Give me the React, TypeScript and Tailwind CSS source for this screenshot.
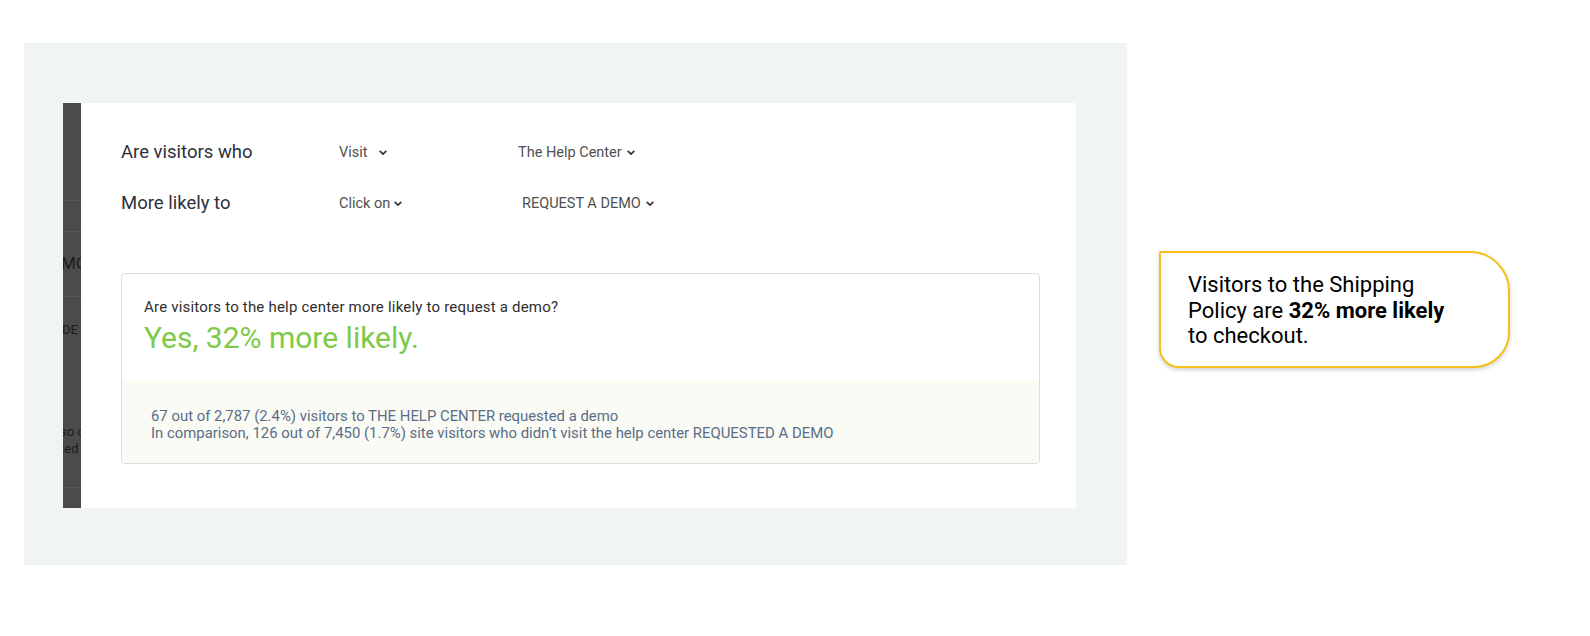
import React from 'react';

const Chevron: React.FC<{ className?: string }> = ({ className }) => (
  <svg width="8" height="6" viewBox="0 0 8 6" className={className} fill="none">
    <path d="M1.2 1.4 L4 4.2 L6.8 1.4" stroke="#3a3a3a" strokeWidth="1.8" strokeLinecap="round" strokeLinejoin="round" />
  </svg>
);

const Picker: React.FC<{ label: string; gap?: string; className?: string }> = ({ label, gap = 'ml-[5px]', className = '' }) => (
  <div className={`flex items-center h-[24px] pt-[1px] text-[14.5px] leading-[22px] text-[#4f4f4f] ${className}`}>
    <span>{label}</span>
    <Chevron className={`${gap} mt-[1px]`} />
  </div>
);

const Strip: React.FC = () => (
  <div className="w-[18px] h-[405px] bg-[#4b4b4b] overflow-hidden flex flex-col text-[#1c1c1c] whitespace-nowrap">
    <div className="h-[98px] border-b border-[#565656]" />
    <div className="h-[31px] border-b border-[#565656]" />
    <div className="h-[65px] border-b border-[#565656] flex items-center -ml-[2px] text-[17px]">MO</div>
    <div className="h-[106px] flex items-start pt-[23px] text-[13px] -ml-[1px]">DE</div>
    <div className="h-[85px] border-b border-[#565656] flex flex-col pt-[20px] text-[13px] leading-[17px] -ml-[3px]">
      <span>so c</span>
      <span>ted</span>
    </div>
  </div>
);

const Callout: React.FC = () => (
  <div className="w-[351px] h-[117px] border-2 border-[#f5bf1e] rounded-tl-[2px] rounded-tr-[40px] rounded-br-[36px] rounded-bl-[20px] bg-white shadow-[0_2px_4px_rgba(0,0,0,0.18)] pl-[27px] pt-[19px] text-[22px] leading-[25.5px] text-black">
    Visitors to the Shipping
    <br />
    Policy are <span className="font-bold">32% more likely</span>
    <br />
    to checkout.
  </div>
);

export default function App() {
  return (
    <div
      className="w-[1590px] h-[636px] bg-white flex items-start pl-[24px] pt-[43px]"
      style={{ fontFamily: 'Roboto, "Liberation Sans", sans-serif' }}
    >
      <div className="w-[1103px] h-[522px] bg-[#f0f4f4] pl-[39px] pt-[60px] flex items-start">
        <Strip />
        <div className="w-[995px] h-[405px] bg-white pl-[40px] pr-[36px] pt-[37px]">
          <div className="grid grid-cols-[218px_179px_1fr] gap-y-[27px] items-center">
            <div className="h-[24px] text-[18.5px] leading-[24px] text-[#2b313b]">Are visitors who</div>
            <Picker label="Visit" gap="ml-[11px]" />
            <Picker label="The Help Center" />
            <div className="h-[24px] text-[18.5px] leading-[24px] text-[#2b313b]">More likely to</div>
            <Picker label="Click on" gap="ml-[4px]" />
            <Picker label="REQUEST A DEMO" className="ml-[4px]" />
          </div>

          <div className="mt-[58px] border border-[#dcdcdc] rounded-[4px] overflow-hidden">
            <div className="pl-[22px] pt-[25px] pb-[25px]">
              <div className="text-[15px] leading-[17px] tracking-[0.2px] text-[#2e2e2e]">
                Are visitors to the help center more likely to request a demo?
              </div>
              <div className="mt-[5px] text-[30px] leading-[34px] text-[#7dca48]">Yes, 32% more likely.</div>
            </div>
            <div className="bg-[#f9fbf4] pl-[29px] pt-[28px] pb-[21px] text-[14.9px] leading-[17px] text-[#5c6c88]">
              <div>67 out of 2,787 (2.4%) visitors to THE HELP CENTER requested a demo</div>
              <div>In comparison, 126 out of 7,450 (1.7%) site visitors who didn’t visit the help center REQUESTED A DEMO</div>
            </div>
          </div>
        </div>
      </div>

      <div className="ml-[32px] mt-[208px]">
        <Callout />
      </div>
    </div>
  );
}
